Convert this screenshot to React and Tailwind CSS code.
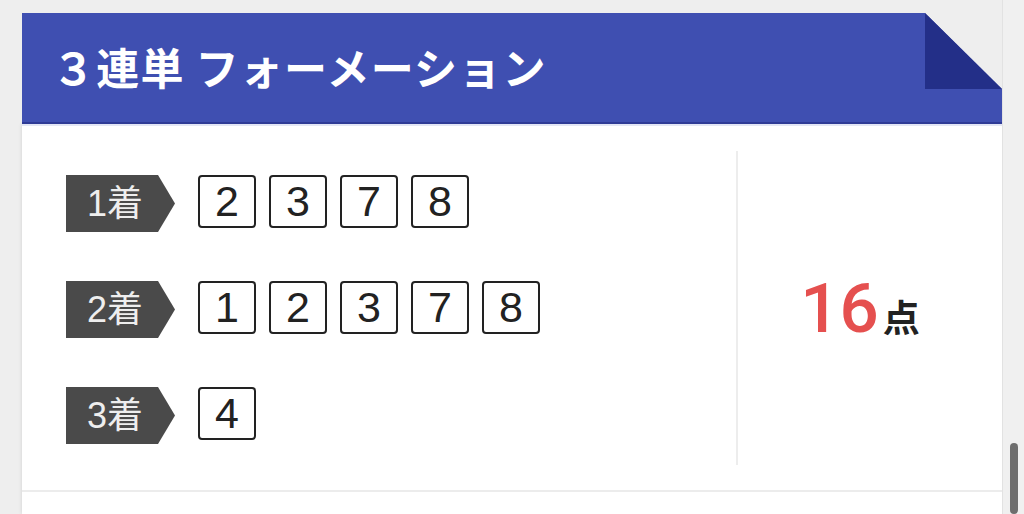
import React from 'react';

const rows = [
  { label: '1着', nums: [2, 3, 7, 8] },
  { label: '2着', nums: [1, 2, 3, 7, 8] },
  { label: '3着', nums: [4] },
];

// ribbon label with a pointed right end
const Tag = ({ children }) => (
  <div className="flex h-[57px] w-[109px] shrink-0 items-center bg-[#4a4a4a] pl-[21px] font-['Liberation_Sans','Noto_Sans_CJK_JP',sans-serif] text-[36px] font-normal leading-none text-[#eeeeee] [clip-path:polygon(0_0,92px_0,100%_50%,92px_100%,0_100%)]">
    {children}
  </div>
);

const NumBox = ({ n }) => (
  <div className="flex h-[53px] w-[58px] items-center justify-center rounded-[4px] border-2 border-[#222222] font-['Liberation_Sans',sans-serif] text-[43px] leading-none text-[#222222]">
    {n}
  </div>
);

const App = () => {
  return (
    <div className="flex h-[514px] w-[1024px] overflow-hidden bg-[#eeeeee] font-['Noto_Sans_CJK_JP','Noto_Sans',sans-serif]">
      {/* Card */}
      <div className="ml-[22px] mt-[13px] flex w-[980px] flex-col">
        {/* Header with folded corner */}
        <div className="relative h-[111px] shrink-0">
          <div className="flex h-full items-center border-b-2 border-[#2f3b96] bg-[#3f4fb1] pb-[2px] pl-[30px] [clip-path:polygon(0_0,903px_0,100%_76px,100%_100%,0_100%)]">
            <h1 className="text-[43px] font-bold tracking-[1.2px] text-white">３連単 フォーメーション</h1>
          </div>
          <div className="absolute right-0 top-0 h-[76px] w-[77px] bg-[#232f88] [clip-path:polygon(0_0,0_100%,100%_100%)]" />
        </div>

        <div className="flex flex-1 flex-col bg-white shadow-[0_0_4px_rgba(0,0,0,0.12)]">
          <div className="h-[2px] shrink-0 bg-[#e3e6f5]" />

          {/* Body */}
          <div className="flex h-[366px] shrink-0 border-b-2 border-[#ececec]">
            <div className="flex w-[714px] flex-col gap-[49px] pl-[44px] pt-[49px]">
              {rows.map((r) => (
                <div key={r.label} className="flex items-start gap-[23px]">
                  <Tag>{r.label}</Tag>
                  <div className="flex gap-[13px]">
                    {r.nums.map((n) => (
                      <NumBox key={n} n={n} />
                    ))}
                  </div>
                </div>
              ))}
            </div>
            <div className="my-[25px] flex flex-1 items-center justify-center border-l-2 border-[#ededed] pr-[20px]">
              <div className="flex items-baseline">
                <span className="font-['Roboto',sans-serif] text-[69px] font-medium leading-none text-[#e5504f]">16</span>
                <span className="ml-[4px] text-[37px] font-bold leading-none text-[#222222]">点</span>
              </div>
            </div>
          </div>
          <div className="flex-1" />
        </div>
      </div>

      {/* Scrollbar gutter */}
      <div className="ml-auto flex w-[22px] flex-col items-center border-l border-[#e2e2e2] bg-[#f0f0f0] pt-[443px]">
        <div className="h-[80px] w-[8px] rounded-full bg-[#6e6e6e]" />
      </div>
    </div>
  );
};

export default App;
